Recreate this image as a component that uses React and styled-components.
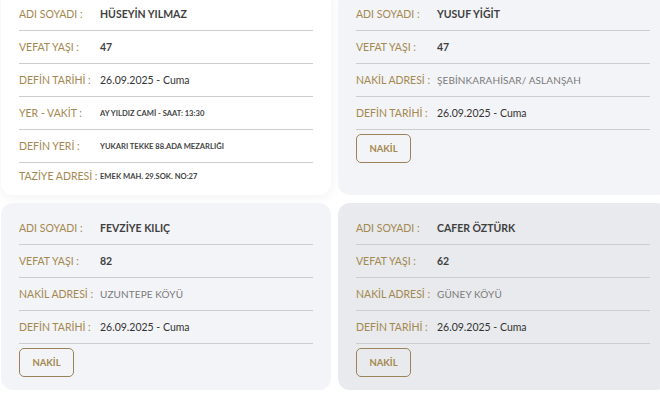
import React from 'react';
import styled, { createGlobalStyle } from 'styled-components';

const GlobalStyle = createGlobalStyle`
  html, body {
    margin: 0;
    padding: 0;
    background: #ffffff;
    overflow: hidden;
  }
  body {
    font-family: 'Lato', 'Noto Sans', sans-serif;
    -webkit-font-smoothing: antialiased;
  }
`;

const people = [
  {
    variant: 'active',
    rows: [
      { label: 'ADI SOYADI :', value: 'HÜSEYİN YILMAZ', kind: 'name' },
      { label: 'VEFAT YAŞI :', value: '47', kind: 'name' },
      { label: 'DEFİN TARİHİ :', value: '26.09.2025 - Cuma', kind: 'date' },
      { label: 'YER - VAKİT :', value: 'AY YILDIZ CAMİ - SAAT: 13:30', kind: 'small' },
      { label: 'DEFİN YERİ :', value: 'YUKARI TEKKE 88.ADA MEZARLIĞI', kind: 'small' },
      { label: 'TAZİYE ADRESİ :', value: 'EMEK MAH. 29.SOK. NO:27', kind: 'small' },
    ],
  },
  {
    variant: 'default',
    button: true,
    rows: [
      { label: 'ADI SOYADI :', value: 'YUSUF YİĞİT', kind: 'name' },
      { label: 'VEFAT YAŞI :', value: '47', kind: 'name' },
      { label: 'NAKİL ADRESİ :', value: 'ŞEBİNKARAHİSAR/ ASLANŞAH', kind: 'muted' },
      { label: 'DEFİN TARİHİ :', value: '26.09.2025 - Cuma', kind: 'date' },
    ],
  },
  {
    variant: 'default',
    button: true,
    rows: [
      { label: 'ADI SOYADI :', value: 'FEVZİYE KILIÇ', kind: 'name' },
      { label: 'VEFAT YAŞI :', value: '82', kind: 'name' },
      { label: 'NAKİL ADRESİ :', value: 'UZUNTEPE KÖYÜ', kind: 'muted' },
      { label: 'DEFİN TARİHİ :', value: '26.09.2025 - Cuma', kind: 'date' },
    ],
  },
  {
    variant: 'hover',
    button: true,
    rows: [
      { label: 'ADI SOYADI :', value: 'CAFER ÖZTÜRK', kind: 'name' },
      { label: 'VEFAT YAŞI :', value: '62', kind: 'name' },
      { label: 'NAKİL ADRESİ :', value: 'GÜNEY KÖYÜ', kind: 'muted' },
      { label: 'DEFİN TARİHİ :', value: '26.09.2025 - Cuma', kind: 'date' },
    ],
  },
];

const App = () => {
  return (
    <>
      <GlobalStyle />
      <Grid>
        {people.map((person, i) => (
          <Card key={i} $variant={person.variant}>
            {person.rows.map((row) => (
              <Row key={row.label} $last={!person.button}>
                <Label>{row.label}</Label>
                <Value $kind={row.kind}>{row.value}</Value>
              </Row>
            ))}
            {person.button && <NakilButton type="button">NAKİL</NakilButton>}
          </Card>
        ))}
      </Grid>
    </>
  );
};

const cardBackgrounds = {
  active: '#ffffff',
  default: '#f3f4f7',
  hover: '#e8eaed',
};

const Grid = styled.div`
  display: grid;
  grid-template-columns: 330px 330px;
  column-gap: 7px;
  row-gap: 8px;
  margin: -11px 0 0 1px;
  width: 667px;
`;

const Card = styled.div`
  display: flex;
  flex-direction: column;
  align-items: flex-start;
  padding: 9px 18px 7px;
  border-radius: 12px;
  background: ${(p) => cardBackgrounds[p.$variant]};
  box-shadow: ${(p) =>
    p.$variant === 'active' ? '0 2px 14px rgba(0, 0, 0, 0.06)' : 'none'};
`;

const Row = styled.div`
  display: flex;
  align-items: center;
  align-self: stretch;
  height: 33px;
  border-bottom: 1px solid #cdcdcd;
  box-sizing: border-box;

  ${(p) =>
    p.$last &&
    `
    &:last-child {
      border-bottom: none;
      height: 25px;
    }
  `}
`;

const Label = styled.span`
  flex: 0 0 81px;
  font-size: 10.5px;
  color: #a3884f;
  white-space: nowrap;
`;

const valueStyles = {
  name: 'font-size: 10.5px; font-weight: 700; color: #3f3f3f;',
  date: 'font-size: 10.5px; font-weight: 400; color: #333333;',
  muted: 'font-size: 10px; font-weight: 400; color: #7a7a7a; letter-spacing: 0.1px;',
  small: 'font-size: 7.6px; font-weight: 700; color: #444444;',
};

const Value = styled.span`
  white-space: nowrap;
  ${(p) => valueStyles[p.$kind]}
`;

const NakilButton = styled.button`
  margin: 4px 0 6px;
  width: 55px;
  height: 29px;
  border: 1px solid #9c8259;
  border-radius: 5px;
  background: transparent;
  color: #a3884f;
  font-family: 'Lato', 'Noto Sans', sans-serif;
  font-size: 9.5px;
  font-weight: 700;
  padding: 0;
  cursor: pointer;
`;

export default App;
